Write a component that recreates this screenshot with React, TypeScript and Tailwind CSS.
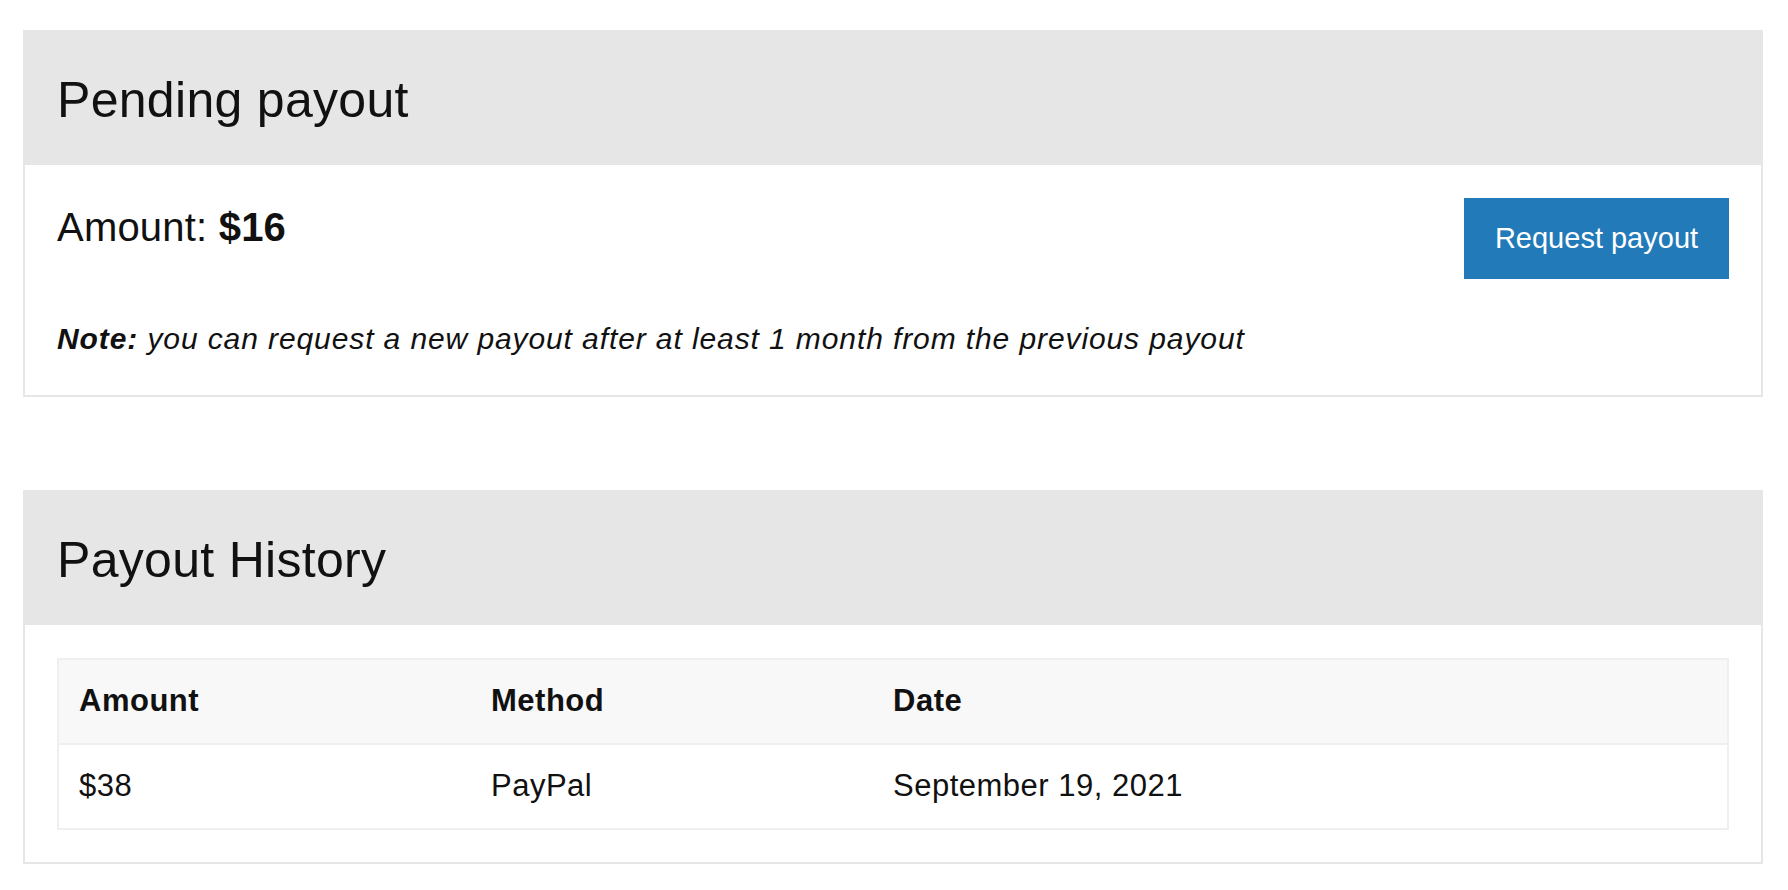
import React from 'react';

const font = { fontFamily: '"Liberation Sans", Arial, Helvetica, sans-serif' };

function Panel({ title, children }: { title: string; children: React.ReactNode }) {
  return (
    <section className="w-[1740px]">
      <div className="h-[135px] bg-[#e6e6e6] flex items-center px-[34px]">
        <h2 className="text-[50px] leading-[1.2] tracking-[0.3px] text-[#111] pt-[5px]">{title}</h2>
      </div>
      <div className="border-2 border-t-0 border-[#e6e6e6] bg-white">{children}</div>
    </section>
  );
}

const payouts = [{ amount: '$38', method: 'PayPal', date: 'September 19, 2021' }];

export default function App() {
  return (
    <div className="min-h-screen bg-white pt-[30px] pl-[23px] pr-[25px] text-[#111]" style={font}>
      <Panel title="Pending payout">
        <div className="px-[32px] pt-[33px] pb-[38px]">
          <div className="flex justify-between items-start">
            <p className="text-[40px] leading-[1.2] tracking-[0.2px] mt-[5px]">
              Amount: <strong className="font-bold">$16</strong>
            </p>
            <button className="h-[81px] w-[265px] bg-[#237ab8] text-white text-[29px]">
              Request payout
            </button>
          </div>
          <p className="mt-[42px] text-[30px] leading-[1.2] tracking-[0.9px] italic">
            <strong className="font-bold">Note:</strong> you can request a new payout after at least 1 month from the previous payout
          </p>
        </div>
      </Panel>

      <div className="h-[93px]" />

      <Panel title="Payout History">
        <div className="p-[32px] pt-[33px]">
          <table className="w-full border-2 border-[#efefef] border-collapse text-[31px] leading-[1.45] tracking-[0.5px]">
            <thead>
              <tr className="bg-[#f8f8f8] border-b-2 border-[#efefef]">
                <th className="w-[413px] text-left font-bold px-[20px] py-[19px]">Amount</th>
                <th className="w-[402px] text-left font-bold px-[20px] py-[19px]">Method</th>
                <th className="text-left font-bold px-[20px] py-[19px]">Date</th>
              </tr>
            </thead>
            <tbody>
              {payouts.map((p) => (
                <tr key={p.date}>
                  <td className="px-[20px] py-[19px]">{p.amount}</td>
                  <td className="px-[20px] py-[19px]">{p.method}</td>
                  <td className="px-[20px] py-[19px]">{p.date}</td>
                </tr>
              ))}
            </tbody>
          </table>
        </div>
      </Panel>
    </div>
  );
}
